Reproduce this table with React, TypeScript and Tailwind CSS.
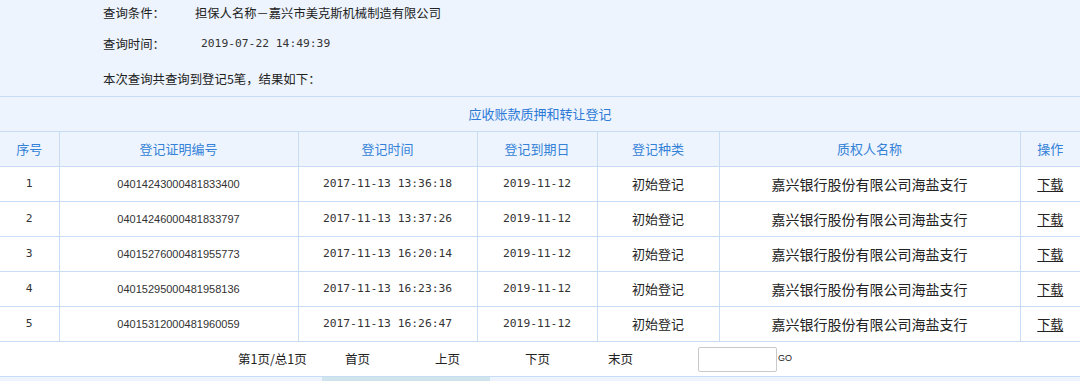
import React from "react";

type Row = {
  no: number;
  cert: string;
  time: string;
  expire: string;
  kind: string;
  holder: string;
};

const rows: Row[] = [
  { no: 1, cert: "04014243000481833400", time: "2017-11-13 13:36:18", expire: "2019-11-12", kind: "初始登记", holder: "嘉兴银行股份有限公司海盐支行" },
  { no: 2, cert: "04014246000481833797", time: "2017-11-13 13:37:26", expire: "2019-11-12", kind: "初始登记", holder: "嘉兴银行股份有限公司海盐支行" },
  { no: 3, cert: "04015276000481955773", time: "2017-11-13 16:20:14", expire: "2019-11-12", kind: "初始登记", holder: "嘉兴银行股份有限公司海盐支行" },
  { no: 4, cert: "04015295000481958136", time: "2017-11-13 16:23:36", expire: "2019-11-12", kind: "初始登记", holder: "嘉兴银行股份有限公司海盐支行" },
  { no: 5, cert: "04015312000481960059", time: "2017-11-13 16:26:47", expire: "2019-11-12", kind: "初始登记", holder: "嘉兴银行股份有限公司海盐支行" },
];

const cjk = "font-['SimSun','Noto_Sans_CJK_SC',sans-serif]";
const mono = "font-['DejaVu_Sans_Mono','Noto_Sans_CJK_SC',monospace] text-[11.3px] text-[#333]";
const cell = "border border-[#c8dcf3] h-[35px] p-0 text-center";

export default function App() {
  return (
    <div className={`w-[1080px] h-[381px] overflow-hidden bg-[#edf4fd] text-[13px] text-[#222] ${cjk}`}>
      {/* query summary */}
      <div className="h-[96px] pl-[103px] pt-[4px] flex flex-col text-[12.4px]">
        <div className="flex items-center h-[19px]">
          <span className="w-[92px]">查询条件：</span>
          <span className="text-[12.3px]">担保人名称－嘉兴市美克斯机械制造有限公司</span>
        </div>
        <div className="flex items-center h-[19px] mt-[12px]">
          <span className="w-[98px]">查询时间：</span>
          <span className={mono}>2019-07-22 14:49:39</span>
        </div>
        <div className="flex items-center h-[19px] mt-[16px]">
          <span>本次查询共查询到登记5笔，结果如下：</span>
        </div>
      </div>

      <table className="w-[1080px] table-fixed border-collapse">
        <colgroup>
          <col className="w-[59px]" />
          <col className="w-[239px]" />
          <col className="w-[179px]" />
          <col className="w-[120px]" />
          <col className="w-[122px]" />
          <col className="w-[301px]" />
          <col className="w-[60px]" />
        </colgroup>
        <thead>
          <tr>
            <th colSpan={7} className={`${cell} border-x-0 font-normal text-[#2d7ad6] bg-[#edf4fd]`}>
              应收账款质押和转让登记
            </th>
          </tr>
          <tr className="bg-[#edf4fd] text-[#3482d8]">
            <th className={`${cell} border-l-0 font-normal`}>序号</th>
            <th className={`${cell} font-normal`}>登记证明编号</th>
            <th className={`${cell} font-normal`}>登记时间</th>
            <th className={`${cell} font-normal`}>登记到期日</th>
            <th className={`${cell} font-normal`}>登记种类</th>
            <th className={`${cell} font-normal`}>质权人名称</th>
            <th className={`${cell} border-r-0 font-normal`}>操作</th>
          </tr>
        </thead>
        <tbody className="bg-white text-[#222]">
          {rows.map((r) => (
            <tr key={r.no}>
              <td className={`${cell} border-l-0 ${mono}`}>{r.no}</td>
              <td className={`${cell} font-['Liberation_Sans',sans-serif] text-[11px] text-[#333]`}>{r.cert}</td>
              <td className={`${cell} ${mono}`}>{r.time}</td>
              <td className={`${cell} ${mono}`}>{r.expire}</td>
              <td className={cell}>{r.kind}</td>
              <td className={`${cell} text-[14px]`}>{r.holder}</td>
              <td className={`${cell} border-r-0`}>
                <a className="underline underline-offset-2 cursor-pointer">下载</a>
              </td>
            </tr>
          ))}
          <tr>
            <td colSpan={7} className={`${cell} border-x-0 text-left`}>
              <div className="flex items-center pl-[238px] text-[12.5px]">
                <span className="w-[107px]">第1页/总1页</span>
                <span className="w-[90px]">首页</span>
                <span className="w-[90px]">上页</span>
                <span className="w-[83px]">下页</span>
                <span className="w-[90px]">末页</span>
                <input className="w-[79px] h-[25px] border border-[#c9c9c9] rounded-[2px] bg-white outline-none" />
                <span className="ml-[1px] text-[9px] font-['Liberation_Sans',sans-serif]">GO</span>
              </div>
            </td>
          </tr>
        </tbody>
      </table>

      <div className="ml-[322px] w-[168px] h-[4px] bg-[#cfe4ec]" />
    </div>
  );
}
